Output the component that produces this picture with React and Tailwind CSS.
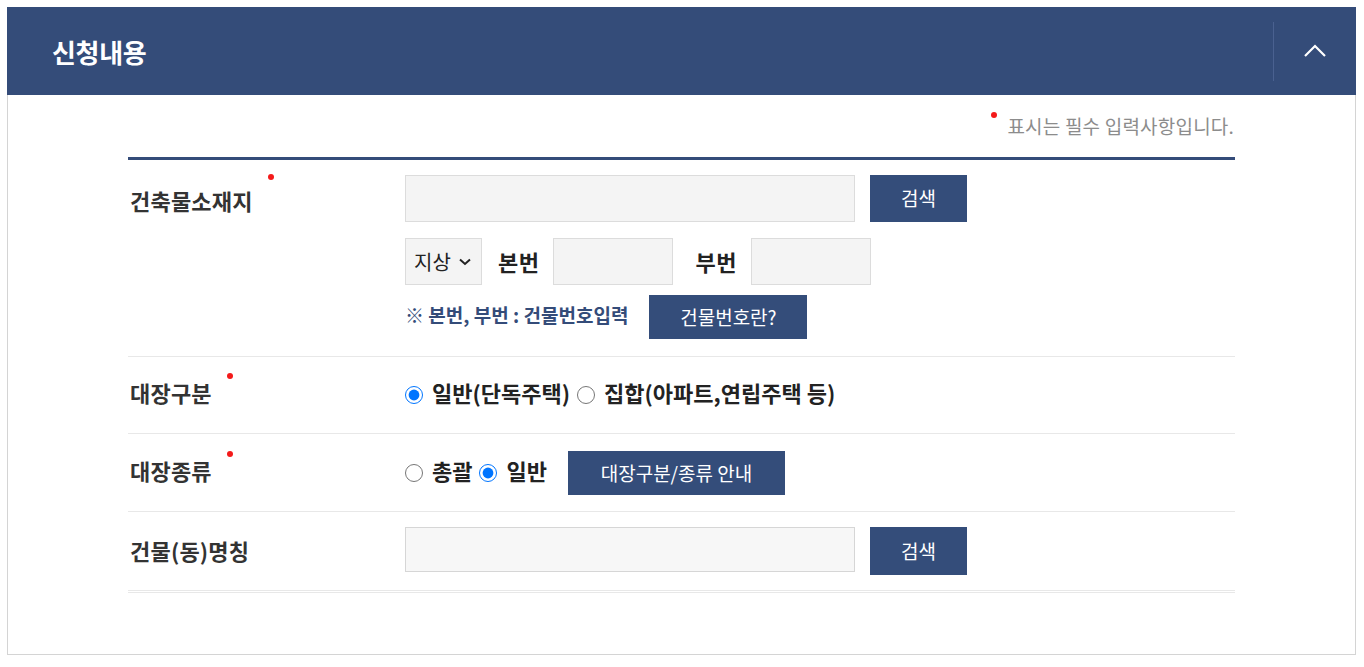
import React, { useState } from "react";

const font = { fontFamily: '"Noto Sans CJK KR", "Noto Sans", sans-serif' };

const Label = ({ children, required, h = "h-[47px]", pad = "pt-[2px]", dot = "top-[-11px]" }) => (
  <div className={`flex w-[277px] shrink-0 items-center pl-[2px] ${pad} ${h}`}>
    <span className="relative text-[22px] font-semibold leading-[30px] tracking-[0.2px] text-[#333]">
      {children}
      {required && (
        <span
          className={`absolute right-[-21px] h-[6px] w-[6px] rounded-full bg-[#f41a1a] ${dot}`}
        />
      )}
    </span>
  </div>
);

const NavyButton = ({ children, className }) => (
  <button
    className={`flex items-center justify-center bg-[#344d7a] text-[19px] text-white ${className}`}
  >
    {children}
  </button>
);

const Radio = ({ name, checked, onChange, label }) => (
  <label className="flex cursor-pointer items-center">
    <input
      type="radio"
      name={name}
      checked={checked}
      onChange={onChange}
      className="m-0 h-[18px] w-[18px] accent-[#0075ff]"
    />
    <span className="ml-[9px] mr-[7px] pb-[6px] text-[22px] font-semibold leading-[30px] text-[#222]">
      {label}
    </span>
  </label>
);

export default function App() {
  const [kind, setKind] = useState("general");
  const [type, setType] = useState("general");

  return (
    <div className="bg-white pl-[7px] pr-[8px] pt-[7px]" style={font}>
      {/* Header */}
      <div className="flex h-[88px] items-center bg-[#344c79]">
        <h2 className="flex-1 pl-[45px] text-[26px] font-bold tracking-[-0.3px] text-white">
          신청내용
        </h2>
        <div className="h-[59px] w-px bg-[#4a6190]" />
        <button className="flex w-[82px] items-center justify-center">
          <svg width="24" height="14" viewBox="0 0 24 14" fill="none">
            <path d="M2 12 L12 2 L22 12" stroke="white" strokeWidth="2.2" />
          </svg>
        </button>
      </div>

      {/* Body */}
      <div className="h-[560px] border border-t-0 border-[#d4d4d4] px-[120px]">
        <div className="flex justify-end pt-[18px]">
          <span className="relative pr-[1px] text-[19px] leading-[26px] tracking-[0.2px] text-[#8c8c8c]">
            <span className="absolute left-[-16px] top-[-1px] h-[6px] w-[6px] rounded-full bg-[#f41a1a]" />
            표시는 필수 입력사항입니다.
          </span>
        </div>

        <div className="mt-[18px] border-t-[3px] border-[#344c79]">
          {/* 건축물소재지 */}
          <div className="flex border-b border-[#e8e8e8] pb-[17px] pt-[15px]">
            <Label required>건축물소재지</Label>
            <div className="flex flex-col">
              <div className="flex items-center">
                <input className="h-[47px] w-[450px] border border-[#dcdcdc] bg-[#f4f4f4] outline-none" />
                <NavyButton className="ml-[15px] h-[47px] w-[97px]">검색</NavyButton>
              </div>
              <div className="mt-[16px] flex items-center">
                <div className="flex h-[47px] w-[77px] items-center border border-[#dcdcdc] bg-[#f4f4f4] pl-[8px] text-[20px] text-[#222]">
                  지상
                  <svg className="ml-[8px]" width="12" height="8" viewBox="0 0 12 8" fill="none">
                    <path d="M1 1.5 L6 6 L11 1.5" stroke="#222" strokeWidth="2" />
                  </svg>
                </div>
                <span className="ml-[16px] text-[22px] font-semibold tracking-[0.5px] text-[#222]">
                  본번
                </span>
                <input className="ml-[14px] h-[47px] w-[120px] border border-[#dcdcdc] bg-[#f4f4f4] outline-none" />
                <span className="ml-[22px] text-[22px] font-semibold tracking-[0.5px] text-[#222]">
                  부번
                </span>
                <input className="ml-[14px] h-[47px] w-[120px] border border-[#dcdcdc] bg-[#f4f4f4] outline-none" />
              </div>
              <div className="mt-[10px] flex items-center">
                <span className="pb-[3px] text-[19px] font-semibold text-[#344c79]">
                  ※ 본번, 부번 : 건물번호입력
                </span>
                <NavyButton className="ml-[21px] h-[44px] w-[158px]">건물번호란?</NavyButton>
              </div>
            </div>
          </div>

          {/* 대장구분 */}
          <div className="flex border-b border-[#e8e8e8] py-[15px]">
            <Label required h="h-[46px]" pad="pb-[7px]" dot="top-[-4px]">
              대장구분
            </Label>
            <div className="flex h-[46px] items-center">
              <Radio
                name="kind"
                checked={kind === "general"}
                onChange={() => setKind("general")}
                label="일반(단독주택)"
              />
              <Radio
                name="kind"
                checked={kind === "set"}
                onChange={() => setKind("set")}
                label="집합(아파트,연립주택 등)"
              />
            </div>
          </div>

          {/* 대장종류 */}
          <div className="flex border-b border-[#e8e8e8] pb-[15px] pt-[16px]">
            <Label required h="h-[46px]" pad="pb-[7px]" dot="top-[-4px]">
              대장종류
            </Label>
            <div className="flex h-[46px] items-center">
              <Radio
                name="type"
                checked={type === "total"}
                onChange={() => setType("total")}
                label="총괄"
              />
              <Radio
                name="type"
                checked={type === "general"}
                onChange={() => setType("general")}
                label="일반"
              />
              <NavyButton className="ml-[14px] h-[44px] w-[217px]">대장구분/종류 안내</NavyButton>
            </div>
          </div>

          {/* 건물(동)명칭 */}
          <div className="flex border-b-[3px] border-double border-[#e8e8e8] py-[15px]">
            <Label h="h-[48px]" pad="pb-[2px]">
              건물(동)명칭
            </Label>
            <div className="flex items-start">
              <input className="h-[45px] w-[450px] border border-[#d6d6d6] bg-[#f7f7f7] outline-none" />
              <NavyButton className="ml-[15px] h-[48px] w-[97px]">검색</NavyButton>
            </div>
          </div>
        </div>
      </div>
    </div>
  );
}
